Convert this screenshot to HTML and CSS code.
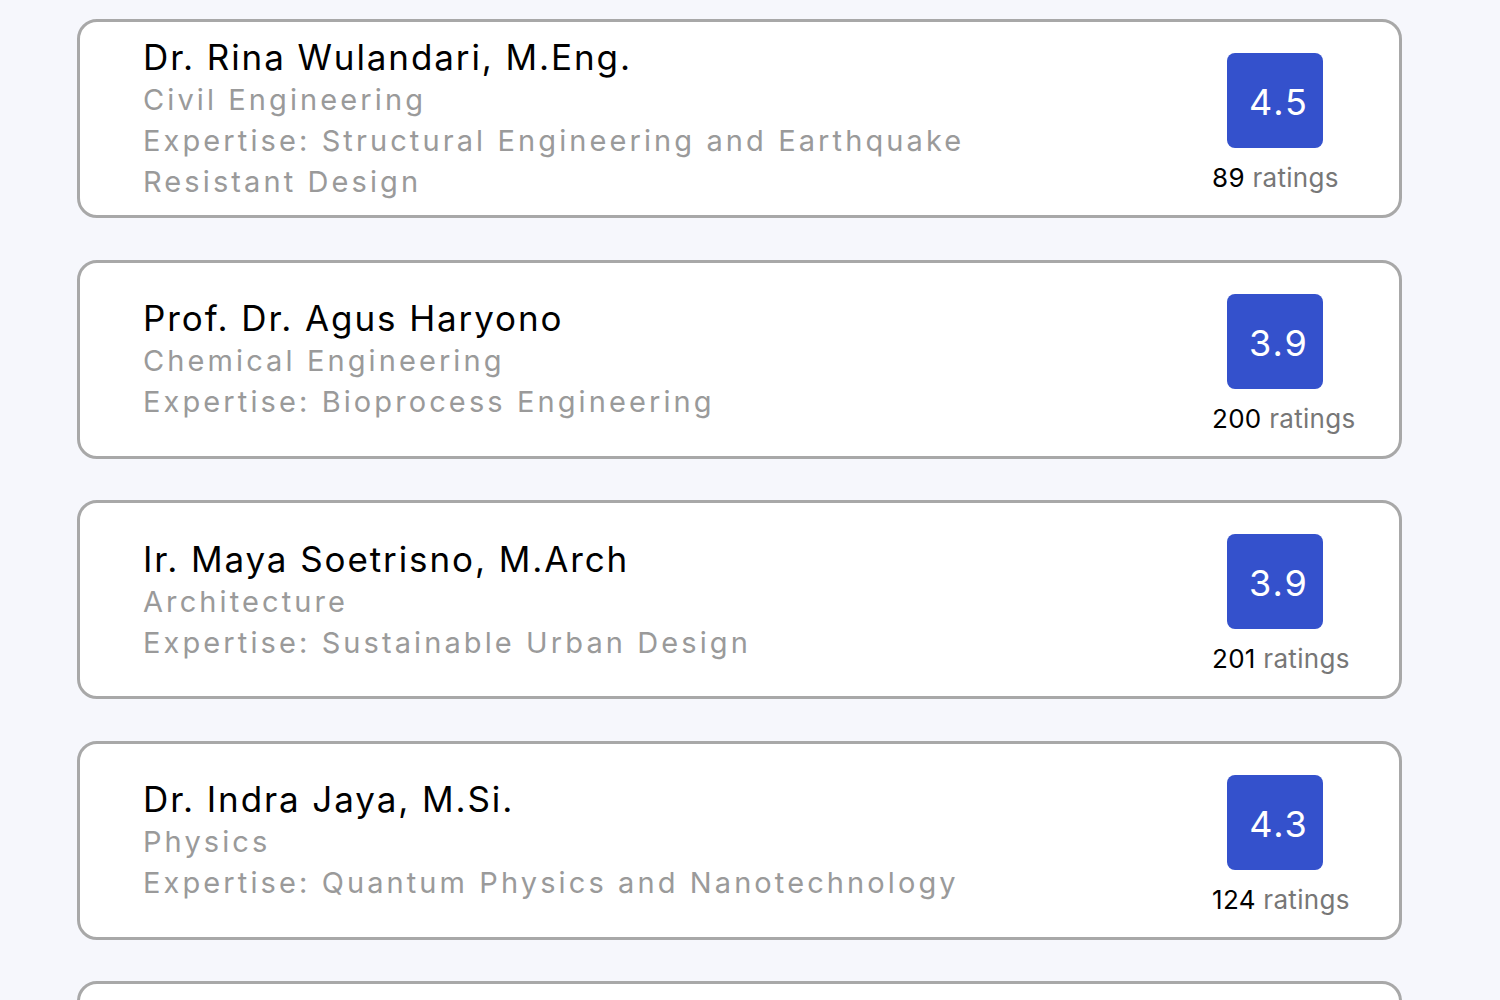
FILE: index.html
```html
<!DOCTYPE html>
<html lang="en">
<head>
  <meta charset="UTF-8">
  <title>Lecturers</title>
  <link rel="stylesheet" href="styles.css">
</head>
<body>
  <div class="list">
    <div class="card">
      <div class="info">
        <div class="name">Dr. Rina Wulandari, M.Eng.</div>
        <div class="sub">Civil Engineering</div>
        <div class="sub">Expertise: Structural Engineering and Earthquake Resistant Design</div>
      </div>
      <div class="rating">
        <div class="score">4.5</div>
        <div class="count"><b>89</b> ratings</div>
      </div>
    </div>

    <div class="card">
      <div class="info">
        <div class="name">Prof. Dr. Agus Haryono</div>
        <div class="sub">Chemical Engineering</div>
        <div class="sub">Expertise: Bioprocess Engineering</div>
      </div>
      <div class="rating">
        <div class="score">3.9</div>
        <div class="count"><b>200</b> ratings</div>
      </div>
    </div>

    <div class="card">
      <div class="info">
        <div class="name">Ir. Maya Soetrisno, M.Arch</div>
        <div class="sub">Architecture</div>
        <div class="sub">Expertise: Sustainable Urban Design</div>
      </div>
      <div class="rating">
        <div class="score">3.9</div>
        <div class="count"><b>201</b> ratings</div>
      </div>
    </div>

    <div class="card">
      <div class="info">
        <div class="name">Dr. Indra Jaya, M.Si.</div>
        <div class="sub">Physics</div>
        <div class="sub">Expertise: Quantum Physics and Nanotechnology</div>
      </div>
      <div class="rating">
        <div class="score">4.3</div>
        <div class="count"><b>124</b> ratings</div>
      </div>
    </div>

    <div class="card">
      <div class="info">
        <div class="name">Dr. Siti Rahmawati, M.T.</div>
        <div class="sub">Electrical Engineering</div>
        <div class="sub">Expertise: Power Systems</div>
      </div>
      <div class="rating">
        <div class="score">4.1</div>
        <div class="count"><b>97</b> ratings</div>
      </div>
    </div>
  </div>
</body>
</html>
```

FILE: styles.css
```css
body {
  margin: 0;
  background-color: #f6f7fc;
  font-family: Inter, "Noto Sans", sans-serif;
  overflow: hidden;
  height: 1000px;
}

.list {
  display: flex;
  flex-direction: column;
  gap: 41.5px;
  padding: 19px 0 0 77px;
  width: 1325px;
}

.card {
  box-sizing: border-box;
  height: 199px;
  flex-shrink: 0;
  background: #fff;
  border: 3px solid #a8a8a8;
  border-radius: 20px;
  padding: 0 62px 0 63px;
  display: flex;
  align-items: center;
  justify-content: space-between;
}

.info {
  width: 900px;
}

.name {
  font-size: 35px;
  line-height: 44px;
  color: #000;
  letter-spacing: 1.9px;
}

.sub {
  font-size: 29px;
  line-height: 41px;
  color: #9a9a9a;
  letter-spacing: 3.1px;
}

.rating {
  align-self: flex-start;
  margin-top: 31px;
  width: 125px;
  display: flex;
  flex-direction: column;
  align-items: center;
}

.score {
  box-sizing: border-box;
  width: 96px;
  height: 95px;
  padding: 3px 0 0 9px;
  border-radius: 8px;
  background-color: #3451cc;
  color: #fff;
  font-size: 36px;
  letter-spacing: 2px;
  display: flex;
  align-items: center;
  justify-content: center;
}

.count {
  align-self: flex-start;
  white-space: nowrap;
  margin-top: 12px;
  font-size: 26px;
  line-height: 35px;
  color: #777;
  letter-spacing: 0.3px;
}

.count b {
  font-weight: normal;
  color: #000;
}
```
